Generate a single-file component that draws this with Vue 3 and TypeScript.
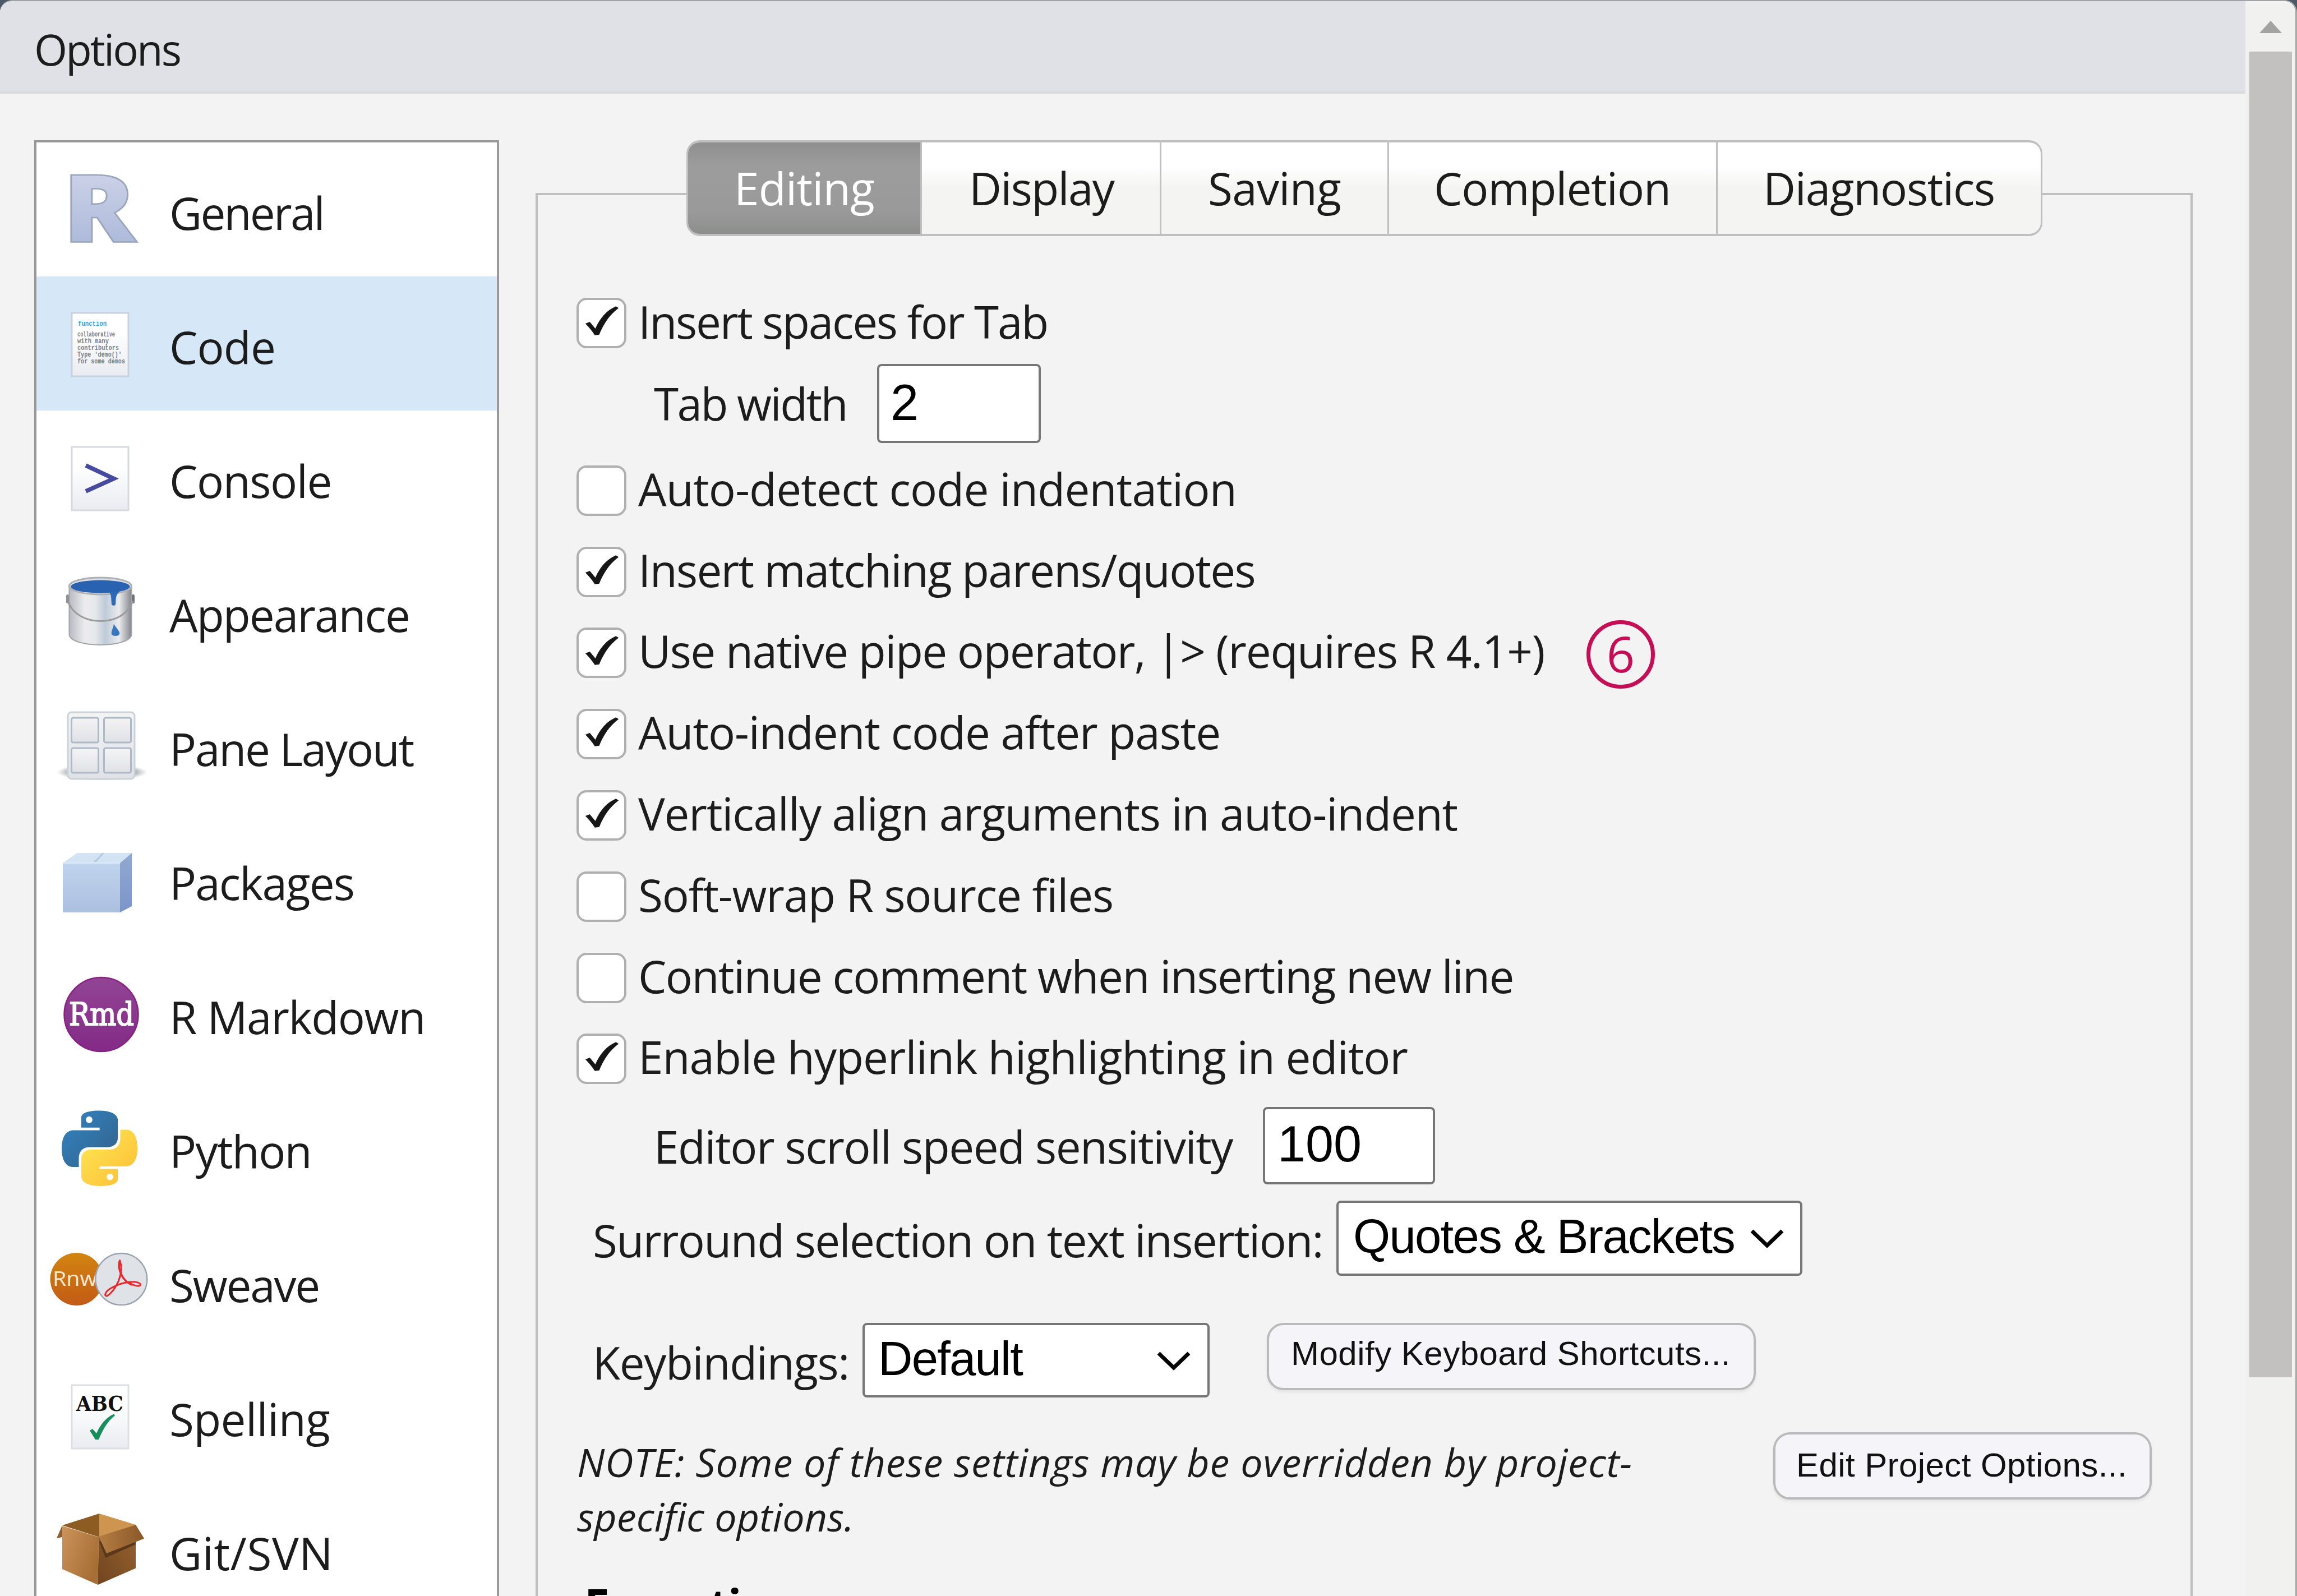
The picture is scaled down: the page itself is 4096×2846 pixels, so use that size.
<script setup lang="ts">
import type { Directive } from 'vue'

interface Category {
  name: string
  icon: string
  width: number
}
interface Tab {
  name: string
  width: number
  pad: number
  text: number
}
interface Option {
  label: string
  rest?: string
  checked: boolean
  width: number
  restWidth?: number
  badge?: string
}

const categories: Category[] = [
  { name: 'General', icon: 'general', width: 275 },
  { name: 'Code', icon: 'code', width: 189 },
  { name: 'Console', icon: 'console', width: 289 },
  { name: 'Appearance', icon: 'appearance', width: 428 },
  { name: 'Pane Layout', icon: 'panes', width: 435 },
  { name: 'Packages', icon: 'packages', width: 329 },
  { name: 'R Markdown', icon: 'rmarkdown', width: 456 },
  { name: 'Python', icon: 'python', width: 253 },
  { name: 'Sweave', icon: 'sweave', width: 267 },
  { name: 'Spelling', icon: 'spelling', width: 286 },
  { name: 'Git/SVN', icon: 'git', width: 292 },
]
const activeCategory = 'Code'

const tabs: Tab[] = [
  { name: 'Editing', width: 417, pad: 82, text: 250 },
  { name: 'Display', width: 427, pad: 84, text: 258 },
  { name: 'Saving', width: 406, pad: 83, text: 237 },
  { name: 'Completion', width: 586, pad: 80, text: 422 },
  { name: 'Diagnostics', width: 582, pad: 81, text: 413 },
]
const activeTab = 'Editing'

const options: Option[] = [
  { label: 'Auto-detect code indentation', checked: false, width: 1067 },
  { label: 'Insert matching parens/quotes', checked: true, width: 1100 },
  {
    label: 'Use native pipe operator,',
    rest: ' |> (requires R 4.1+)',
    checked: true,
    width: 904,
    restWidth: 712,
    badge: '6',
  },
  { label: 'Auto-indent code after paste', checked: true, width: 1038 },
  { label: 'Vertically align arguments in auto-indent', checked: true, width: 1461 },
  { label: 'Soft-wrap R source files', checked: false, width: 847 },
  { label: 'Continue comment when inserting new line', checked: false, width: 1561 },
  { label: 'Enable hyperlink highlighting in editor', checked: true, width: 1372 },
]

// Tracks a label so that it occupies exactly the given width.
const vFit: Directive<HTMLElement, number> = {
  mounted(el, binding) {
    const count = (el.textContent ?? '').length
    const natural = el.getBoundingClientRect().width
    if (count > 0) el.style.letterSpacing = `${(binding.value - natural) / count}px`
  },
}

const tick =
  'M16 46L24 43L34 55C43 35 55 22 71 15L76 18C60 30 49 46 41 66L33 67C28 59 22 52 16 46Z'

const snake =
  'M14.25.18l.9.2.73.26.59.3.45.32.34.34.25.34.16.33.1.3.04.26.02.2-.01.13V8.5l-.05.63-.13.55-.21.46-.26.38-.3.31-.33.25-.35.19-.35.14-.33.1-.3.07-.26.04-.21.02H8.77l-.69.05-.59.14-.5.22-.41.27-.33.32-.27.35-.2.36-.15.37-.1.35-.07.32-.04.27-.02.21v3.06H3.17l-.21-.03-.28-.07-.32-.12-.35-.18-.36-.26-.36-.36-.35-.46-.32-.59-.28-.73-.21-.88-.14-1.05-.05-1.23.06-1.22.16-1.04.24-.87.32-.71.36-.57.4-.44.42-.33.42-.24.4-.16.36-.1.32-.05.24-.01h.16l.06.01h8.16v-.83H6.18l-.01-2.75-.02-.37.05-.34.11-.31.17-.28.25-.26.31-.23.38-.2.44-.18.51-.15.58-.12.64-.1.71-.06.77-.04.84-.02 1.27.05zm-6.3 1.98l-.23.33-.08.41.08.41.23.34.33.22.41.09.41-.09.33-.22.23-.34.08-.41-.08-.41-.23-.33-.33-.22-.41-.09-.41.09z'
</script>

<template>
  <div class="screen">
    <div class="dialog">
      <div class="main">
        <header class="titlebar"><span v-fit="260" class="t">Options</span></header>
        <div class="content">
          <nav class="sidebar">
            <div v-for="c in categories" :key="c.name" class="item" :class="{ selected: c.name === activeCategory }">
              <svg class="icon" viewBox="0 0 234 239">
                <template v-if="c.icon === 'general'">
                  <defs>
                    <linearGradient id="rg" x1="0" y1="0" x2="0" y2="1">
                      <stop offset="0.2" stop-color="#ced3e8" />
                      <stop offset="0.85" stop-color="#aab8d9" />
                    </linearGradient>
                  </defs>
                  <text x="47" y="177" class="rlogo" textLength="130" lengthAdjust="spacingAndGlyphs">R</text>
                </template>
                <template v-else-if="c.icon === 'code'">
                  <defs>
                    <linearGradient id="pg" x1="0" y1="0" x2="0" y2="1">
                      <stop offset="0.3" stop-color="#ffffff" />
                      <stop offset="1" stop-color="#e8ebf0" />
                    </linearGradient>
                  </defs>
                  <rect x="63" y="65" width="101" height="113" fill="url(#pg)" stroke="#c9d2dc" stroke-width="3" />
                  <g class="mono">
                    <text x="74" y="88" textLength="51" lengthAdjust="spacingAndGlyphs" class="fn">function</text>
                    <text x="73" y="107" textLength="67" lengthAdjust="spacingAndGlyphs">collaborative</text>
                    <text x="73" y="119" textLength="56" lengthAdjust="spacingAndGlyphs">with many</text>
                    <text x="73" y="131" textLength="74" lengthAdjust="spacingAndGlyphs">contributors</text>
                    <text x="73" y="143" textLength="79" lengthAdjust="spacingAndGlyphs">Type 'demo()'</text>
                    <text x="73" y="155" textLength="85" lengthAdjust="spacingAndGlyphs">for some demos</text>
                  </g>
                </template>
                <template v-else-if="c.icon === 'console'">
                  <rect x="63" y="65" width="101" height="113" fill="url(#pg)" stroke="#d6d9dd" stroke-width="3" />
                  <path d="M88 98L138 121.500L88 144" fill="none" stroke="#464ba0" stroke-width="7.500" />
                </template>
                <template v-else-if="c.icon === 'appearance'">
                  <defs>
                    <linearGradient id="bg" x1="0" y1="0" x2="1" y2="0">
                      <stop offset="0" stop-color="#b9bac2" />
                      <stop offset="0.25" stop-color="#ececee" />
                      <stop offset="0.42" stop-color="#e6e8ea" />
                      <stop offset="0.58" stop-color="#bfcbd8" />
                      <stop offset="0.8" stop-color="#ebebed" />
                      <stop offset="1" stop-color="#85868d" />
                    </linearGradient>
                  </defs>
                  <path d="M58.500 74V161C60 172 85 179 114 179S168 172 169.500 161V74Z" fill="url(#bg)" stroke="#a2a4aa" stroke-width="2" />
                  <ellipse cx="114" cy="74" rx="55.500" ry="15" fill="#dfe0e3" stroke="#aeb0b5" stroke-width="3" />
                  <ellipse cx="114" cy="75" rx="52.500" ry="11.500" fill="#2862b0" />
                  <path d="M129 84C134 89 133 96 134 107Q138 111 141 107C142 98 140 91 148 84Z" fill="#2d69b6" />
                  <rect x="53" y="89" width="5" height="16" rx="2.500" fill="#909298" />
                  <rect x="170" y="89" width="5" height="16" rx="2.500" fill="#707278" />
                  <path d="M56 101C64 124 88 137 116 136.500S164 122 172 101" fill="none" stroke="#9b9b9b" stroke-width="3" />
                  <path d="M138 142C145 152 149 155 148 160C146 164 136 164 134 160C133 155 136 151 138 142Z" fill="#3677c0" />
                </template>
                <template v-else-if="c.icon === 'panes'">
                  <defs>
                    <radialGradient id="sh">
                      <stop offset="0.6" stop-color="#707479" stop-opacity="0.95" />
                      <stop offset="1" stop-color="#9a9da1" stop-opacity="0" />
                    </radialGradient>
                    <linearGradient id="wg" x1="0" y1="0" x2="0" y2="1">
                      <stop offset="0" stop-color="#f4f4f5" />
                      <stop offset="1" stop-color="#dfe1e6" />
                    </linearGradient>
                  </defs>
                  <ellipse cx="117" cy="167" rx="81" ry="15" fill="url(#sh)" />
                  <rect x="56" y="60" width="119" height="119" rx="7" fill="url(#wg)" stroke="#ccd2da" stroke-width="3" />
                  <g fill="url(#wg)" stroke="#b0b9c6" stroke-width="3">
                    <rect x="62.500" y="70" width="48" height="44" rx="3" />
                    <rect x="120.500" y="70" width="48" height="44" rx="3" />
                    <rect x="62.500" y="124" width="48" height="44" rx="3" />
                    <rect x="120.500" y="124" width="48" height="44" rx="3" />
                  </g>
                </template>
                <template v-else-if="c.icon === 'packages'">
                  <defs>
                    <linearGradient id="kg" x1="0" y1="0" x2="0" y2="1">
                      <stop offset="0" stop-color="#c0d4ee" />
                      <stop offset="1" stop-color="#adbfdf" />
                    </linearGradient>
                    <linearGradient id="ks" x1="0" y1="0" x2="0" y2="1">
                      <stop offset="0" stop-color="#93a9d1" />
                      <stop offset="1" stop-color="#7b95ca" />
                    </linearGradient>
                  </defs>
                  <path d="M47 90L73 72H170L149 90Z" fill="#d2e3f4" />
                  <path d="M117 72L100 90H105L121 72Z" fill="#b4cbe8" />
                  <path d="M149 90L170 72V167L149 178Z" fill="url(#ks)" />
                  <rect x="47" y="89" width="102" height="89" fill="url(#kg)" />
                  <rect x="47" y="88" width="102" height="3" fill="#dbe8f6" />
                </template>
                <template v-else-if="c.icon === 'rmarkdown'">
                  <defs>
                    <linearGradient id="mg" x1="0" y1="0" x2="0" y2="1">
                      <stop offset="0" stop-color="#924594" />
                      <stop offset="1" stop-color="#832a86" />
                    </linearGradient>
                  </defs>
                  <circle cx="115.500" cy="121" r="66" fill="url(#mg)" stroke="#862382" stroke-width="2.500" />
                  <text x="58" y="139.500" class="rmd" textLength="116" lengthAdjust="spacingAndGlyphs">Rmd</text>
                </template>
                <template v-else-if="c.icon === 'python'">
                  <defs>
                    <linearGradient id="yb" x1="0" y1="0" x2="1" y2="1">
                      <stop offset="0.2" stop-color="#327db8" />
                      <stop offset="0.9" stop-color="#33658f" />
                    </linearGradient>
                    <linearGradient id="yy" x1="1" y1="1" x2="0" y2="0">
                      <stop offset="0.2" stop-color="#fde050" />
                      <stop offset="0.8" stop-color="#fec53a" />
                    </linearGradient>
                  </defs>
                  <g transform="translate(45.300 53.500) scale(5.600)">
                    <path :d="snake" fill="url(#yb)" />
                    <path :d="snake" fill="url(#yy)" transform="rotate(180 12 12)" />
                  </g>
                </template>
                <template v-else-if="c.icon === 'sweave'">
                  <defs>
                    <linearGradient id="sg" x1="0" y1="0" x2="0" y2="1">
                      <stop offset="0" stop-color="#d28510" />
                      <stop offset="1" stop-color="#c25a16" />
                    </linearGradient>
                  </defs>
                  <circle cx="71.500" cy="115" r="47" fill="url(#sg)" />
                  <text x="29" y="126.500" class="rnw" textLength="79" lengthAdjust="spacingAndGlyphs">Rnw</text>
                  <circle cx="151.300" cy="115" r="46" fill="#dfe2e7" stroke="#9aa3b1" stroke-width="2.500" />
                  <g fill="none" stroke="#e8292b" stroke-linecap="round">
                    <path d="M148.500 82C145 92 149 102 152 108C157 118 163 122 170 125" stroke-width="3.500" />
                    <path d="M148.500 82C153 92 151 106 146 119C141 130 134 140 126 145C120 146 122 137 133 131C142 126 154 121 167 120C178 119 187 122 185 126C182 129 173 126 166 122" stroke-width="3" />
                  </g>
                </template>
                <template v-else-if="c.icon === 'spelling'">
                  <rect x="63" y="65" width="101" height="113" fill="url(#pg)" stroke="#dcdfe4" stroke-width="3" />
                  <text x="71" y="111" class="abc" textLength="84" lengthAdjust="spacingAndGlyphs">ABC</text>
                  <path d="M95 146L100 143L107 151C114 135 124 123 138 116.500L140 119C126 130 117 147 111 162H105Z" fill="#178e5b" />
                </template>
                <template v-else>
                  <defs>
                    <linearGradient id="gl" x1="0" y1="0" x2="1" y2="0.6">
                      <stop offset="0" stop-color="#cc945b" />
                      <stop offset="1" stop-color="#a66e33" />
                    </linearGradient>
                    <linearGradient id="gr" x1="0" y1="1" x2="1" y2="0">
                      <stop offset="0" stop-color="#70451f" />
                      <stop offset="1" stop-color="#986330" />
                    </linearGradient>
                    <linearGradient id="gf" x1="0" y1="0" x2="1" y2="0">
                      <stop offset="0" stop-color="#b57e44" />
                      <stop offset="1" stop-color="#8a5728" />
                    </linearGradient>
                  </defs>
                  <path d="M46 76L36 99L46 97Z" fill="#8f5e30" />
                  <path d="M112 55L46 76L112 97Z" fill="#8c5c22" />
                  <path d="M112 55L177 75L112 97Z" fill="#cd954f" />
                  <path d="M46 77L111 97L109.500 182L46 154Z" fill="url(#gl)" />
                  <path d="M111 97L177 76V152.500L109.500 182Z" fill="url(#gr)" />
                  <path d="M112 105L123 134L177 110V100Z" fill="#5b381a" />
                  <path d="M111 96L177 75L192 99.500L125 126Z" fill="url(#gf)" />
                </template>
              </svg>
              <span v-fit="c.width" class="t name">{{ c.name }}</span>
            </div>
          </nav>

          <section class="pane">
            <div class="tabs">
              <div
                v-for="t in tabs"
                :key="t.name"
                class="tab"
                :class="{ active: t.name === activeTab }"
                :style="{ width: t.width + 'px', paddingLeft: t.pad + 'px' }"
              >
                <span v-fit="t.text" class="t">{{ t.name }}</span>
              </div>
            </div>

            <div class="check first">
              <span class="box"><svg viewBox="0 0 90 90"><path :d="tick" /></svg></span>
              <span v-fit="730" class="t">Insert spaces for Tab</span>
            </div>
            <div class="field tabwidth">
              <span v-fit="344" class="t">Tab width</span>
              <span class="input two">2</span>
            </div>

            <div v-for="o in options" :key="o.label" class="check">
              <span class="box"><svg v-if="o.checked" viewBox="0 0 90 90"><path :d="tick" /></svg></span>
              <span v-fit="o.width" class="t">{{ o.label }}</span>
              <span v-if="o.rest" v-fit="o.restWidth ?? 0" class="t rest">{{ o.rest }}</span>
              <span v-if="o.badge" class="badge">{{ o.badge }}</span>
            </div>

            <div class="field scroll">
              <span v-fit="1032" class="t">Editor scroll speed sensitivity</span>
              <span class="input hundred">100</span>
            </div>

            <div class="field surround">
              <span v-fit="1302" class="t">Surround selection on text insertion:</span>
              <span class="select wide">
                <span v-fit="680">Quotes &amp; Brackets</span>
                <svg class="chev" viewBox="0 0 60 34"><path d="M3 3L30 29L57 3" /></svg>
              </span>
            </div>

            <div class="field keys">
              <span v-fit="457" class="t">Keybindings:</span>
              <span class="select narrow">
                <span v-fit="257">Default</span>
                <svg class="chev" viewBox="0 0 60 34"><path d="M3 3L30 29L57 3" /></svg>
              </span>
              <span class="button modify"><span v-fit="784">Modify Keyboard Shortcuts...</span></span>
            </div>

            <div class="note">
              <div class="notetext">
                <span v-fit="1882" class="t">NOTE: Some of these settings may be overridden by project-</span>
                <span v-fit="494" class="t">specific options.</span>
              </div>
              <span class="button edit"><span v-fit="590">Edit Project Options...</span></span>
            </div>

            <h2 class="heading">Execution</h2>
          </section>
        </div>
      </div>
      <aside class="scrollbar">
        <svg class="arrow" viewBox="0 0 40 22"><path d="M20 0L40 22H0Z" /></svg>
        <div class="thumb"></div>
      </aside>
    </div>
  </div>
</template>

<style>
html,
body {
  margin: 0;
  overflow: hidden;
}
</style>

<style scoped>
* {
  box-sizing: border-box;
}
.screen {
  width: 4096px;
  height: 2846px;
  overflow: hidden;
  background: #4b5a66;
  color: #1c1c1c;
  font: 400 80px/139px 'Open Sans', 'Noto Sans', sans-serif;
}
.dialog {
  display: flex;
  width: 4096px;
  height: 2900px;
  border-top: 2px solid #a2a3a6;
  border-right: 3px solid #a9a9a9;
  border-radius: 22px 22px 0 0;
  background: #f3f3f3;
  overflow: hidden;
}
.t {
  display: inline-block;
  white-space: pre;
  flex: none;
}
.main {
  width: 4004px;
  flex: none;
}
.titlebar {
  height: 165px;
  padding: 6px 0 0 61px;
  background: #e0e1e6;
  border-bottom: 4px solid #d8dadb;
  font-size: 76px;
  line-height: 160px;
}
.content {
  display: flex;
  padding: 83px 0 0 61px;
}
.sidebar {
  width: 829px;
  height: 2700px;
  flex: none;
  border: 4px solid #999;
  background: #fff;
}
.item {
  display: flex;
  height: 239px;
}
.item.selected {
  background: #d6e7f7;
}
.icon {
  width: 234px;
  height: 239px;
  flex: none;
}
.name {
  height: 239px;
  margin-left: 3px;
  line-height: 249px;
}
.rlogo {
  font: 800 167px 'Open Sans', sans-serif;
  fill: url(#rg);
  stroke: #98a5ba;
  stroke-width: 2.5px;
}
.mono {
  font: 700 12px 'Liberation Mono', monospace;
  fill: #7c7f86;
}
.fn {
  fill: #27a5da;
}
.rmd {
  font: 400 56px 'DejaVu Serif', serif;
  fill: #fff;
  stroke: #fff;
  stroke-width: 2px;
}
.rnw {
  font: 400 37px 'Open Sans', sans-serif;
  fill: #fbe9d4;
}
.abc {
  font: 700 38px 'DejaVu Serif', serif;
  fill: #111;
}
.pane {
  width: 2955px;
  height: 2700px;
  margin: 94px 0 0 65px;
  flex: none;
  border: 4px solid #bfbfbf;
}
.tabs {
  display: flex;
  width: 2418px;
  height: 171px;
  margin: -98px 0 0 265px;
  border: 4px solid #bfbfbf;
  border-left-width: 3px;
  border-right-width: 3px;
  border-radius: 24px;
  background: linear-gradient(#fff 25%, #f4f4f3 50%, #f4f4f3);
  overflow: hidden;
}
.tab {
  flex: none;
  height: 163px;
  line-height: 162px;
  border-right: 3px solid #bfbfbf;
}
.tab:last-child {
  border-right: 0;
}
.tab.active {
  color: #fff;
  background: linear-gradient(#8f8f8f, #9c9c9c 25%, #9a9a9a 75%, #8c8e8c);
}
.check {
  display: flex;
  align-items: center;
  height: 144.800px;
  padding-left: 69px;
}
.check.first {
  margin-top: 83px;
}
.check .t {
  line-height: 100px;
  margin: -8px 0 0 21px;
}
.check .rest {
  margin-left: 0;
}
.check.first .t {
  margin-top: -6px;
}
.box {
  width: 89px;
  height: 90px;
  flex: none;
  border: 4px solid #b0b0b0;
  border-radius: 18px;
  background: #fff;
}
.box svg {
  display: block;
  width: 89px;
  height: 90px;
  margin: -4px;
  fill: #161616;
}
.badge {
  width: 122px;
  height: 122px;
  margin: 5px 0 0 75px;
  border: 7px solid #c40e55;
  border-radius: 50%;
  color: #c40e55;
  font-size: 88px;
  line-height: 105px;
  text-align: center;
}
.field {
  display: flex;
  align-items: flex-start;
}
.input,
.select {
  display: flex;
  flex: none;
  border: 4px solid #767676;
  border-radius: 8px;
  background: #fff;
  color: #000;
  font-family: 'Liberation Sans', Arial, sans-serif;
  white-space: pre;
}
.input {
  font-size: 90px;
}
.tabwidth {
  height: 153.700px;
  padding-left: 207px;
}
.two {
  width: 292px;
  height: 141px;
  margin-left: 54px;
  padding-left: 20px;
  line-height: 131px;
}
.scroll {
  margin-top: 13px;
  padding-left: 207px;
}
.hundred {
  width: 307px;
  height: 138px;
  margin-left: 54px;
  padding-left: 22px;
  line-height: 125px;
}
.select {
  justify-content: space-between;
  font-size: 85px;
}
.chev {
  width: 60px;
  height: 34px;
  flex: none;
}
.chev path {
  fill: none;
  stroke: #000;
  stroke-width: 7px;
}
.surround {
  height: 134px;
  margin-top: 28px;
  padding-left: 98px;
}
.wide {
  width: 831px;
  height: 134px;
  margin-left: 24px;
  padding: 0 29px 0 26px;
  line-height: 120px;
}
.wide .chev {
  margin-top: 47px;
}
.keys {
  height: 133px;
  margin-top: 84px;
  padding-left: 98px;
}
.narrow {
  width: 619px;
  height: 133px;
  margin-left: 24px;
  padding: 0 30px 0 24px;
  line-height: 119px;
}
.narrow .chev {
  margin-top: 47px;
}
.button {
  display: block;
  flex: none;
  height: 120px;
  border: 4px solid #bababa;
  border-radius: 30px;
  background: #f5f4f8;
  box-shadow: 0 4px 5px rgba(0, 0, 0, 0.06);
  color: #111;
  font: 60px/102px 'Liberation Sans', Arial, sans-serif;
  white-space: pre;
}
.button span,
.select span {
  display: inline-block;
}
.modify {
  width: 872px;
  margin-left: 102px;
  padding-left: 39px;
  line-height: 101px;
}
.note {
  display: flex;
  align-items: flex-start;
  margin-top: 62px;
  padding-left: 70px;
}
.notetext {
  display: flex;
  flex-direction: column;
  align-items: flex-start;
  width: 2133px;
  flex: none;
  padding-top: 5px;
  font-size: 70px;
  font-style: italic;
  line-height: 97px;
}
.edit {
  width: 675px;
  padding-left: 37px;
  line-height: 110px;
}
.heading {
  margin: 53px 0 0 83px;
  color: #000;
  font-size: 80px;
  font-weight: 700;
  letter-spacing: -1.800px;
  line-height: 109px;
}
.scrollbar {
  width: 89px;
  height: 2846px;
  flex: none;
  padding: 35px 6px 0 7px;
  background: #f1f1ef;
}
.arrow {
  display: block;
  width: 40px;
  height: 22px;
  margin-left: 18px;
  fill: #a3a3a3;
}
.thumb {
  width: 76px;
  height: 2364px;
  margin-top: 33px;
  background: #c2c1bf;
}
</style>
